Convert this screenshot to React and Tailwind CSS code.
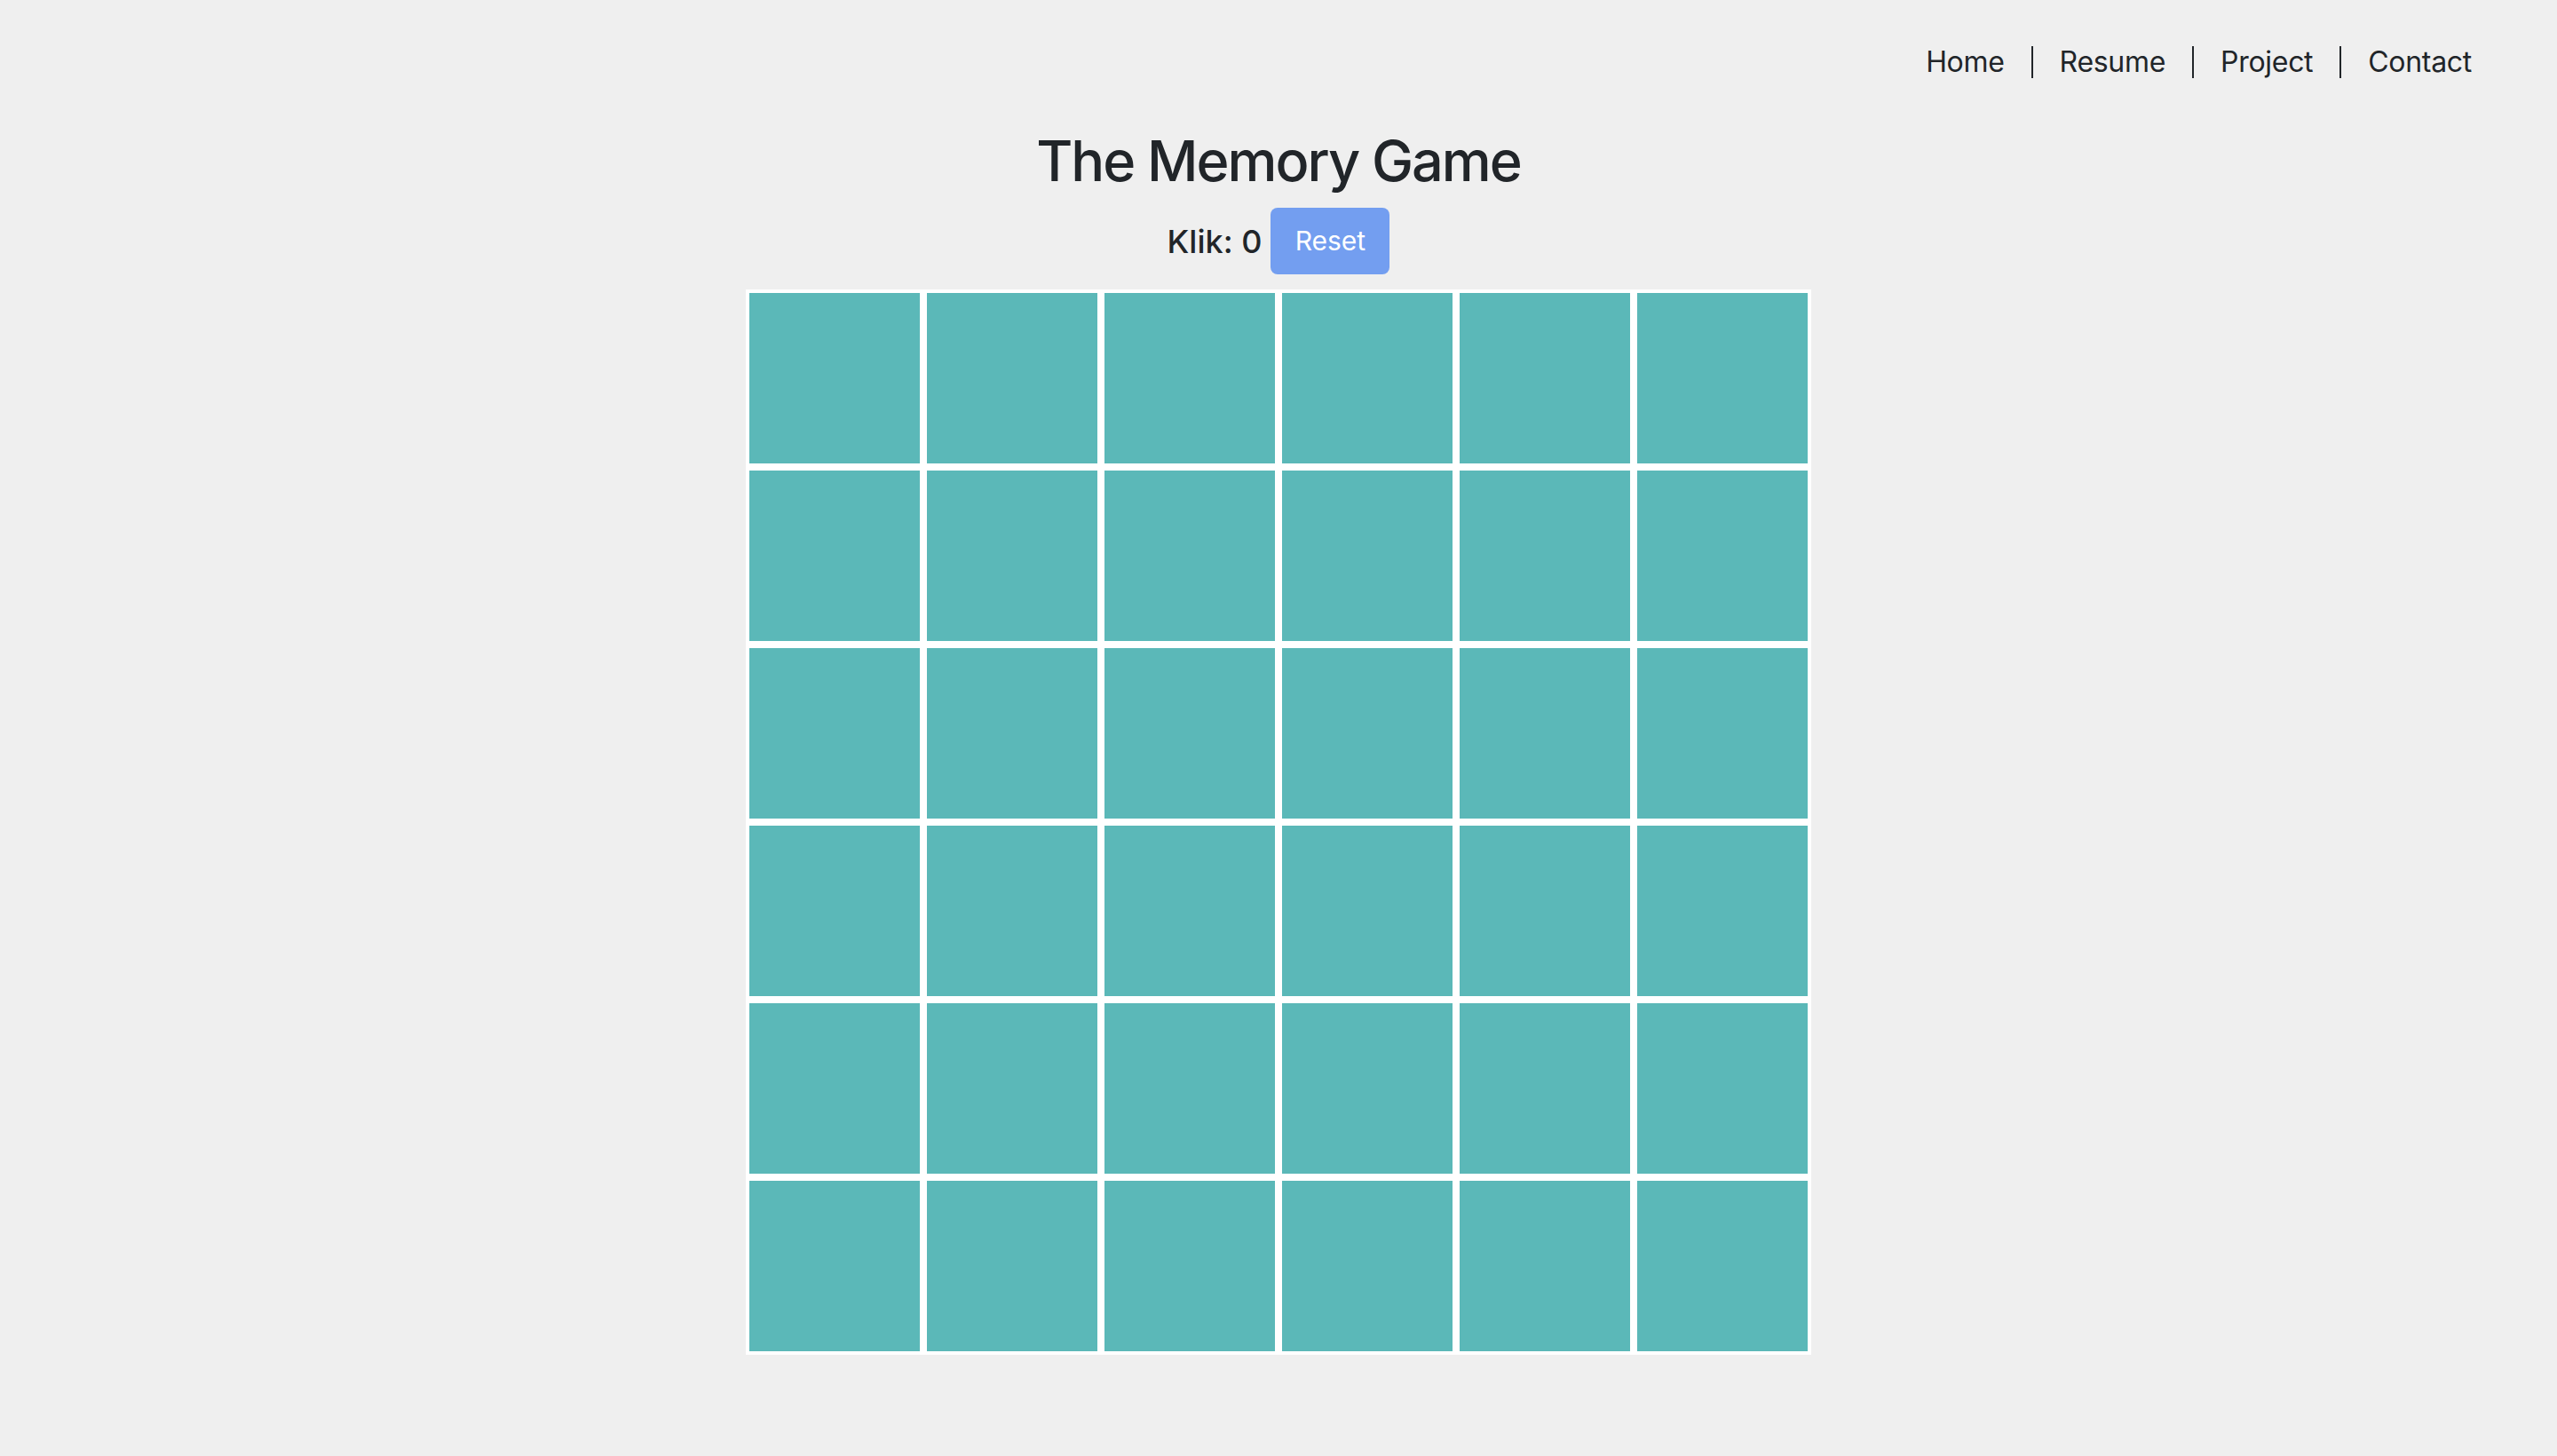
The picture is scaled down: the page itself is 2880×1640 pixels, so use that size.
import React, { useState } from "react";

const links = ["Home", "Resume", "Project", "Contact"];

function NavBar() {
  return (
    <nav className="flex justify-end pr-[66px] pt-[52px]">
      <ul className="flex items-center">
        {links.map((l, i) => (
          <li
            key={l}
            className={
              "px-[30px] text-[32px] leading-[36px] tracking-[-0.3px] text-[#212529] " +
              (i > 0 ? "border-l-2 border-[#212529]" : "")
            }
          >
            {l}
          </li>
        ))}
      </ul>
    </nav>
  );
}

export default function App() {
  const [clicks, setClicks] = useState(0);
  const cards = Array.from({ length: 36 }, (_, i) => i);

  return (
    <div
      className="min-h-screen bg-[#efefef] text-[#212529]"
      style={{ fontFamily: "Inter, 'Noto Sans', sans-serif" }}
    >
      <NavBar />
      <main className="flex flex-col items-center">
        <h1 className="mt-[55px] text-[63px] font-medium leading-[76px] tracking-[-2px]">
          The Memory Game
        </h1>
        <div className="mt-[15px] flex items-center gap-[10px]">
          <span className="text-[36px] font-medium">Klik: {clicks}</span>
          <button
            onClick={() => setClicks(0)}
            className="h-[75px] w-[134px] rounded-[8px] bg-[#739ef0] text-[30px] text-white"
          >
            Reset
          </button>
        </div>
        <div className="mt-[17px] grid grid-cols-6 w-[1200px] bg-white">
          {cards.map((c) => (
            <div
              key={c}
              onClick={() => setClicks((n) => n + 1)}
              className="h-[200px] w-[200px] border-4 border-white bg-[#5bb8b8]"
            />
          ))}
        </div>
      </main>
    </div>
  );
}
